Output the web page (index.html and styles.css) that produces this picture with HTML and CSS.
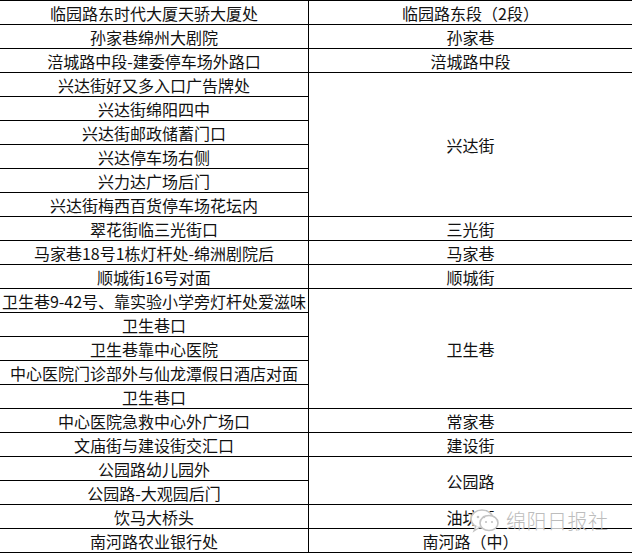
FILE: index.html
```html
<!DOCTYPE html>
<html lang="zh">
<head>
<meta charset="utf-8">
<link rel="stylesheet" href="styles.css">
</head>
<body>
<div class="sheet">
  <div class="grid">
    <div class="c l">临园路东时代大厦天骄大厦处</div><div class="c r">临园路东段（2段）</div>
    <div class="c l">孙家巷绵州大剧院</div><div class="c r">孙家巷</div>
    <div class="c l">涪城路中段-建委停车场外路口</div><div class="c r">涪城路中段</div>
    <div class="c l">兴达街好又多入口广告牌处</div><div class="c r span6">兴达街</div>
    <div class="c l">兴达街绵阳四中</div>
    <div class="c l">兴达街邮政储蓄门口</div>
    <div class="c l">兴达停车场右侧</div>
    <div class="c l">兴力达广场后门</div>
    <div class="c l">兴达街梅西百货停车场花坛内</div>
    <div class="c l">翠花街临三光街口</div><div class="c r">三光街</div>
    <div class="c l">马家巷18号1栋灯杆处-绵洲剧院后</div><div class="c r">马家巷</div>
    <div class="c l">顺城街16号对面</div><div class="c r">顺城街</div>
    <div class="c l">卫生巷9-42号、靠实验小学旁灯杆处爱滋味</div><div class="c r span5">卫生巷</div>
    <div class="c l">卫生巷口</div>
    <div class="c l">卫生巷靠中心医院</div>
    <div class="c l">中心医院门诊部外与仙龙潭假日酒店对面</div>
    <div class="c l">卫生巷口</div>
    <div class="c l">中心医院急救中心外广场口</div><div class="c r">常家巷</div>
    <div class="c l">文庙街与建设街交汇口</div><div class="c r">建设街</div>
    <div class="c l">公园路幼儿园外</div><div class="c r span2">公园路</div>
    <div class="c l">公园路-大观园后门</div>
    <div class="c l">饮马大桥头</div><div class="c r">油坊街</div>
    <div class="c l">南河路农业银行处</div><div class="c r">南河路（中）</div>
  </div>
  <div class="watermark">
    <svg class="wm-icon" width="30" height="26" viewBox="0 0 30 26">
      <ellipse cx="12" cy="11" rx="11" ry="9" fill="#fff" stroke="#c4c4c4" stroke-width="1.6"/>
      <path d="M6 18 L4 23 L10 19" fill="#fff" stroke="#c4c4c4" stroke-width="1.4"/>
      <ellipse cx="19" cy="15" rx="9" ry="7.5" fill="#fff" stroke="#c4c4c4" stroke-width="1.6"/>
      <circle cx="8" cy="9" r="1.3" fill="#c4c4c4"/>
      <circle cx="14" cy="9" r="1.3" fill="#c4c4c4"/>
      <circle cx="16" cy="14" r="1.1" fill="#c4c4c4"/>
      <circle cx="22" cy="14" r="1.1" fill="#c4c4c4"/>
    </svg>
    <span class="wm-text">绵阳日报社</span>
  </div>
</div>
</body>
</html>
```
FILE: styles.css
```css
html, body {
  margin: 0;
  padding: 0;
  background: #fff;
}
.sheet {
  position: relative;
  width: 632px;
  height: 553px;
  overflow: hidden;
}
.grid {
  display: grid;
  grid-template-columns: 308px 323px;
  grid-auto-rows: 23px;
  gap: 1px;
  padding: 1px 0;
  background: #000;
}
.c {
  background: #fff;
  display: flex;
  align-items: center;
  justify-content: center;
  font-family: "Noto Sans CJK SC", "Noto Sans", sans-serif;
  font-size: 16px;
  line-height: 23px;
  color: #111;
  white-space: nowrap;
  padding-top: 2px;
  box-sizing: border-box;
}
.l { grid-column: 1; }
.r { grid-column: 2; }
.span6 { grid-row: span 6; }
.span5 { grid-row: span 5; }
.span2 { grid-row: span 2; }
.watermark {
  position: absolute;
  left: 470px;
  top: 508px;
  display: flex;
  align-items: center;
  gap: 6px;
}
.wm-icon {
  display: block;
}
.wm-text {
  font-family: "Noto Sans CJK SC", sans-serif;
  font-size: 20px;
  font-weight: 300;
  color: #bdbdbd;
  letter-spacing: 0.5px;
  line-height: 22px;
}
```
